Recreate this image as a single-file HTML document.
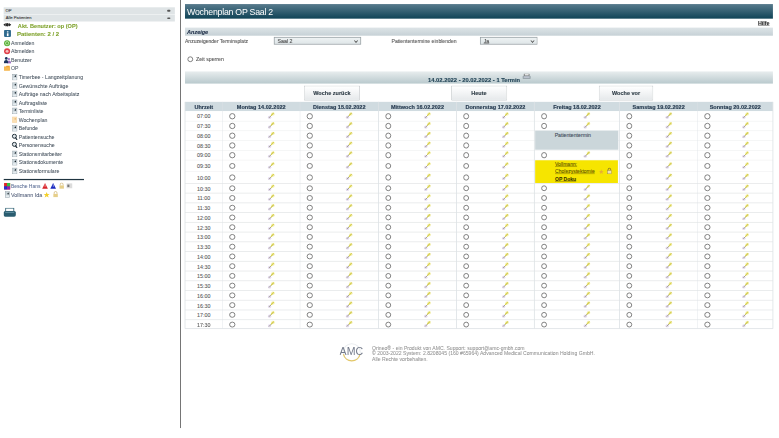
<!DOCTYPE html>
<html><head><meta charset="utf-8">
<style>
html,body{margin:0;padding:0;background:#fff;overflow:hidden;width:779px;height:438px}
#w{position:absolute;left:0;top:0;width:1920px;height:1080px;transform:scale(0.405729);transform-origin:0 0;font-family:"Liberation Sans",sans-serif;color:#333;-webkit-text-stroke:0.2px currentColor}
.a{position:absolute;white-space:nowrap}
.sel{position:absolute;box-sizing:border-box;border:2px solid #98a1a5;background:linear-gradient(#eef2f3,#dfe6e8);font-size:13px;color:#4a4a4a;padding-left:7px;line-height:17px}
.sel:after{content:"";position:absolute;right:7px;top:3.5px;width:5px;height:5px;border-right:2px solid #4a4a4a;border-bottom:2px solid #4a4a4a;transform:rotate(45deg)}
.sb{position:absolute;box-sizing:border-box;background:#dfe4e6;font-size:11.5px;color:#333;padding-left:9px}
.sb:after{content:"";position:absolute;right:11px;top:6.5px;width:8px;height:4.5px;border-radius:2px;background:#555}
.nav{font-size:12.8px;color:#44505c;height:21px;line-height:21px;-webkit-text-stroke:0.1px currentColor}
.nav i{display:inline-block;position:absolute;left:0;top:2px;width:16px;height:16px}
.radio{position:absolute;width:10.4px;height:10.4px;border:2.1px solid #666;border-radius:50%;background:#fff}
.pin{position:absolute}
.btn{position:absolute;box-sizing:border-box;border:2.4px solid #c6cacc;border-bottom-color:#b0b5b8;background:linear-gradient(#ffffff,#e6e9eb);font-weight:bold;font-size:13.6px;color:#2e3c46;-webkit-text-stroke:0.3px currentColor;text-align:center;line-height:36px;border-radius:2px}
.th{position:absolute;top:0;height:23.6px;line-height:27px;text-align:center;font-weight:bold;font-size:13.6px;color:#263b50;-webkit-text-stroke:0.4px currentColor}
.time{position:absolute;font-size:13.2px;color:#5a5a5a;text-align:center}
</style></head><body><div id="w">
<svg width="0" height="0" style="position:absolute">
<defs>
<symbol id="pin" viewBox="0 0 16 16">
<ellipse cx="11.5" cy="4.8" rx="3.8" ry="3.4" fill="#f4f0b8"/>
<ellipse cx="4.5" cy="12" rx="3.6" ry="3.2" fill="#e4daf0"/>
<path d="M4 12.5 L12 4.2" stroke="#a0a08c" stroke-width="2" stroke-linecap="round"/>
<path d="M8.2 8 L12.6 3.4" stroke="#dcd44c" stroke-width="2.3" stroke-linecap="round"/>
</symbol>
<symbol id="doc" viewBox="0 0 16 16">
<rect x="3.2" y="1" width="10.5" height="14.5" fill="#c9d4da" stroke="#96a2a9" stroke-width="1.2"/>
<rect x="4.4" y="10" width="8" height="4.5" fill="#e6ecef"/>
<path d="M7 6.5 L11.5 3 L11.5 8 Z" fill="#1c262c"/>
</symbol>
<symbol id="mag" viewBox="0 0 16 16">
<circle cx="7.5" cy="6.8" r="5" fill="#dfe6ea" stroke="#22303a" stroke-width="2.4"/>
<path d="M10.5 10.5 L13.5 15" stroke="#22303a" stroke-width="3" stroke-linecap="round"/>
</symbol>
</defs></svg>

<div class="sb" style="left:9px;top:17.5px;width:422px;height:17px;line-height:17px;font-size:10.3px;padding-left:4.5px">OP</div>
<div class="a" style="left:9px;top:34.5px;width:422px;height:1.5px;background:#f4f6f7"></div>
<div class="sb" style="left:9px;top:36px;width:422px;height:17px;line-height:17px;font-size:10.3px;padding-left:5px">Alle Patienten</div>
<div class="a" style="left:8px;top:53px;width:20px;height:16px"><svg width="20" height="16" viewBox="0 0 20 16"><path d="M0 8 L6 3.5 L6 12.5 Z M20 8 L14 3.5 L14 12.5 Z" fill="#2a2a2a"/><ellipse cx="10" cy="8" rx="4" ry="4.5" fill="#2a2a2a"/></svg></div>
<div class="a" style="left:44px;top:55.5px;font-size:13.8px;font-weight:bold;color:#7fa22c;line-height:18px">Akt. Benutzer: op (OP)</div>
<div class="a" style="left:10px;top:74px;width:17px;height:17px;background:#2f6a8e;border-radius:2px"><div style="position:absolute;left:7px;top:3px;width:3.5px;height:3px;background:#fff;border-radius:1px"></div><div style="position:absolute;left:7px;top:7.5px;width:3.5px;height:7px;background:#fff"></div></div>
<div class="a" style="left:42px;top:75px;font-size:14.7px;font-weight:bold;color:#7fa22c;line-height:18px">Patienten: 2 / 2</div>
<div class="a" style="left:9px;top:97.5px;width:17px;height:17px"><svg width="17" height="17" viewBox="0 0 17 17"><circle cx="8.5" cy="8.5" r="7.5" fill="#5bb33a"/><circle cx="8.5" cy="8.5" r="4" fill="none" stroke="#e9f7e0" stroke-width="1.5"/></svg></div>
<div class="a nav" style="left:27px;top:95.5px">Anmelden</div>
<div class="a" style="left:9px;top:117.7px;width:17px;height:17px"><svg width="17" height="17" viewBox="0 0 17 17"><circle cx="8.5" cy="8.5" r="7.5" fill="#e0404a"/><circle cx="8.5" cy="8.5" r="3.5" fill="#f7c0c0"/></svg></div>
<div class="a nav" style="left:27px;top:115.7px">Abmelden</div>
<div class="a" style="left:9px;top:139.5px;width:17px;height:17px"><svg width="19" height="17" viewBox="0 0 19 17"><path d="M8 16.5 Q9 9 13 9 Q18 9 18.5 16.5 Z" fill="#9a70c0"/><circle cx="13" cy="5.5" r="2.8" fill="#9a70c0"/><circle cx="6.5" cy="4" r="3.4" fill="#1c3560"/><path d="M0.5 16 Q0.5 8 6.5 8 Q11.5 8 11 16 Z" fill="#1c3560"/></svg></div>
<div class="a nav" style="left:27px;top:137.5px">Benutzer</div>
<div class="a" style="left:9px;top:159.1px;width:17px;height:17px"><svg width="17" height="17" viewBox="0 0 17 17"><path d="M1 5 H6 L7 3 H15 V15 H1 Z" fill="#f2a535"/><path d="M1 7 H16 V15 H1 Z" fill="#f7bb55"/></svg></div>
<div class="a nav" style="left:27px;top:157.1px">OP</div>
<div class="a" style="left:28px;top:181.8px;width:17px;height:17px"><svg width="16" height="16"><use href="#doc"/></svg></div>
<div class="a nav" style="left:46px;top:179.8px">Timerbee - Langzeitplanung</div>
<div class="a" style="left:28px;top:203.0px;width:17px;height:17px"><svg width="16" height="16"><use href="#doc"/></svg></div>
<div class="a nav" style="left:46px;top:201.0px">Gewünschte Aufträge</div>
<div class="a" style="left:28px;top:223.0px;width:17px;height:17px"><svg width="16" height="16"><use href="#doc"/></svg></div>
<div class="a nav" style="left:46px;top:221.0px">Aufträge nach Arbeitsplatz</div>
<div class="a" style="left:28px;top:245.3px;width:17px;height:17px"><svg width="16" height="16"><use href="#doc"/></svg></div>
<div class="a nav" style="left:46px;top:243.3px">Auftragsliste</div>
<div class="a" style="left:28px;top:265.1px;width:17px;height:17px"><svg width="16" height="16"><use href="#doc"/></svg></div>
<div class="a nav" style="left:46px;top:263.1px">Terminliste</div>
<div class="a" style="left:28px;top:287.0px;width:17px;height:17px"><svg width="16" height="16" viewBox="0 0 16 16"><rect x="2.5" y="1" width="11" height="14" fill="#fbe0b4" stroke="#f2c88a" stroke-width="1"/><path d="M7 6.5 L10.5 4 L10.5 8 Z" fill="#e0a050"/></svg></div>
<div class="a nav" style="left:46px;top:285.0px">Wochenplan</div>
<div class="a" style="left:28px;top:307.5px;width:17px;height:17px"><svg width="16" height="16"><use href="#doc"/></svg></div>
<div class="a nav" style="left:46px;top:305.5px">Befunde</div>
<div class="a" style="left:28px;top:328.7px;width:17px;height:17px"><svg width="16" height="16"><use href="#mag"/></svg></div>
<div class="a nav" style="left:46px;top:326.7px">Patientensuche</div>
<div class="a" style="left:28px;top:349.1px;width:17px;height:17px"><svg width="16" height="16"><use href="#mag"/></svg></div>
<div class="a nav" style="left:46px;top:347.1px">Personensuche</div>
<div class="a" style="left:28px;top:370.5px;width:17px;height:17px"><svg width="16" height="16"><use href="#doc"/></svg></div>
<div class="a nav" style="left:46px;top:368.5px">Stationsmitarbeiter</div>
<div class="a" style="left:28px;top:391.8px;width:17px;height:17px"><svg width="16" height="16"><use href="#doc"/></svg></div>
<div class="a nav" style="left:46px;top:389.8px">Stationsdokumente</div>
<div class="a" style="left:28px;top:413.0px;width:17px;height:17px"><svg width="16" height="16"><use href="#doc"/></svg></div>
<div class="a nav" style="left:46px;top:411.0px">Stationsformulare</div>
<div class="a" style="left:9px;top:441px;width:198px;height:3px;background:#1f3440"></div>
<div class="a" style="left:9.6px;top:451px;width:15px;height:16px;background:linear-gradient(90deg,transparent 50%,#30c040 50%) top/100% 50% no-repeat,linear-gradient(90deg,#2030d0 50%,#9020b0 50%) bottom/100% 50% no-repeat,#e02828"></div>
<div class="a nav" style="left:27px;top:449.5px;color:#5a6c94;font-size:12.2px">Besche Hans</div>
<div class="a" style="left:103px;top:450px"><svg width="16" height="16" viewBox="0 0 16 16"><path d="M8 1 L15 15 H1 Z" fill="#d8262c"/><path d="M7.3 5 H8.7 L8.5 11 H7.5 Z" fill="#fff"/></svg></div>
<div class="a" style="left:123px;top:450px"><svg width="16" height="16" viewBox="0 0 16 16"><path d="M8 1 L15 15 H1 Z" fill="#1a2ac0"/><path d="M7.3 5 H8.7 L8.5 11 H7.5 Z" fill="#fff"/></svg></div>
<div class="a" style="left:145px;top:450px"><svg width="14" height="16" viewBox="0 0 14 16"><path d="M3.5 7 V4.5 A3.5 3.5 0 0 1 10.5 4.5 V7" fill="none" stroke="#c8a860" stroke-width="1.6"/><rect x="1.5" y="7" width="11" height="8" fill="#e6cf8a"/></svg></div>
<div class="a" style="left:164px;top:452px;width:14px;height:12px;background:#dcdcdc"><div style="position:absolute;left:2px;top:3px;width:5px;height:6px;background:#777"></div></div>
<div class="a" style="left:10px;top:471px"><svg width="16" height="17"><use href="#doc"/></svg></div>
<div class="a nav" style="left:27px;top:470.8px;color:#4c5874;font-size:13.4px">Vollmann Ida</div>
<div class="a" style="left:107px;top:472px"><svg width="16" height="16" viewBox="0 0 16 16"><path d="M8 1 L10 6 L15.5 6.2 L11.2 9.5 L12.8 15 L8 11.8 L3.2 15 L4.8 9.5 L0.5 6.2 L6 6 Z" fill="#f3d02a"/></svg></div>
<div class="a" style="left:130px;top:471px"><svg width="14" height="16" viewBox="0 0 14 16"><path d="M3.5 7 V4.5 A3.5 3.5 0 0 1 10.5 4.5 V7" fill="none" stroke="#c8a860" stroke-width="1.6"/><rect x="1.5" y="7" width="11" height="8" fill="#e6cf8a"/></svg></div>
<div class="a" style="left:8px;top:512px"><svg width="32" height="24" viewBox="0 0 32 24"><rect x="6" y="1" width="20" height="8" fill="#fff" stroke="#2a5d70" stroke-width="2"/><rect x="1" y="8" width="30" height="14" rx="4" fill="#2a5d70"/><rect x="5" y="10" width="22" height="3" fill="#5a8a9c"/></svg></div>
<div class="a" style="left:444.2px;top:0;width:2.2px;height:1054.5px;background:#555"></div>
<div class="a" style="left:456px;top:10px;width:1449px;height:36px;background:linear-gradient(#587b8d,#0f4356)"></div>
<div class="a" style="left:461px;top:12px;height:36px;line-height:36px;font-size:21.6px;letter-spacing:-0.6px;-webkit-text-stroke:0;color:#fff">Wochenplan OP Saal 2</div>
<div class="a" style="left:1868px;top:50px;font-size:13.2px;font-weight:bold;color:#222;text-decoration:underline;line-height:16px">Hilfe</div>
<div class="a" style="left:456px;top:68px;width:1449px;height:20px;background:linear-gradient(#dde4e7,#c6d1d6)"></div>
<div class="a" style="left:461px;top:69px;font-size:13.6px;font-weight:bold;font-style:italic;color:#1f2f48;line-height:19px;-webkit-text-stroke:0.3px currentColor">Anzeige</div>
<div class="a" style="left:456px;top:93px;font-size:12.4px;color:#555;line-height:17px">Anzuzeigender Terminsplatz</div>
<div class="sel" style="left:675px;top:91px;width:215px;height:19px">Saal 2</div>
<div class="a" style="left:965px;top:93px;font-size:12.6px;color:#555;line-height:17px">Patiententermine einblenden</div>
<div class="sel" style="left:1183px;top:91px;width:142px;height:19px"><span style="text-decoration:underline">Ja</span></div>
<div class="radio" style="left:462px;top:139px"></div>
<div class="a" style="left:483px;top:138px;font-size:12.9px;color:#555;line-height:17px">Zeit sperren</div>
<div class="a" style="left:456px;top:176px;width:1449px;height:30px;background:linear-gradient(#e8edee,#b9c9cd)"></div>
<div class="a" style="left:1055px;top:189px;font-size:14.3px;font-weight:bold;color:#1d3f52;line-height:17px;-webkit-text-stroke:0.3px currentColor">14.02.2022 - 20.02.2022 - 1 Termin</div>
<div class="a" style="left:1287px;top:181px"><svg width="22" height="18" viewBox="0 0 22 18"><rect x="5" y="1" width="12" height="5" fill="#fff" stroke="#555" stroke-width="1.6"/><rect x="1" y="6" width="20" height="8" rx="2" fill="#9aa6ac"/><rect x="4" y="8" width="14" height="2" fill="#dde"/></svg></div>
<div class="btn" style="left:749px;top:210.5px;width:138px;height:37px">Woche zurück</div>
<div class="btn" style="left:1111.5px;top:210.5px;width:138px;height:37px">Heute</div>
<div class="btn" style="left:1476px;top:210.5px;width:134px;height:37px">Woche vor</div>
<div class="a" style="left:456px;top:250.7px;width:1449px;height:23.6px;background:#d0dbe0"></div>
<div class="a" style="left:456px;top:274.3px;width:1449px;height:537.4000000000001px;background:#fff"></div>
<div class="a" style="left:456px;top:250.7px;width:1449px;height:23.6px">
<div class="th" style="left:0;width:92.39999999999998px">Uhrzeit</div>
<div class="th" style="left:92.39999999999998px;width:191.0px">Montag 14.02.2022</div>
<div class="th" style="left:283.4px;width:193.5px">Dienstag 15.02.2022</div>
<div class="th" style="left:476.9px;width:192.19999999999993px">Mittwoch 16.02.2022</div>
<div class="th" style="left:669.0999999999999px;width:191.80000000000018px">Donnerstag 17.02.2022</div>
<div class="th" style="left:860.9000000000001px;width:210.19999999999982px">Freitag 18.02.2022</div>
<div class="th" style="left:1071.1px;width:192.5px">Samstag 19.02.2022</div>
<div class="th" style="left:1263.6px;width:185.4000000000001px">Sonntag 20.02.2022</div>
</div>
<div class="a time" style="left:456px;top:276.1px;width:92.39999999999998px;height:24px;line-height:24px">07:00</div>
<div class="a" style="left:456px;top:297.8px;width:1449px;height:1.5px;background:#e6e8e9"></div>
<div class="radio" style="left:565.1999999999999px;top:279.3px"></div>
<svg class="pin" style="left:659.0999999999999px;top:275.3px" width="19" height="19"><use href="#pin"/></svg>
<div class="radio" style="left:756.1999999999999px;top:279.3px"></div>
<svg class="pin" style="left:851.3499999999999px;top:275.3px" width="19" height="19"><use href="#pin"/></svg>
<div class="radio" style="left:949.6999999999999px;top:279.3px"></div>
<svg class="pin" style="left:1044.1999999999998px;top:275.3px" width="19" height="19"><use href="#pin"/></svg>
<div class="radio" style="left:1141.8999999999999px;top:279.3px"></div>
<svg class="pin" style="left:1236.2px;top:275.3px" width="19" height="19"><use href="#pin"/></svg>
<div class="radio" style="left:1333.7px;top:279.3px"></div>
<svg class="pin" style="left:1437.2px;top:275.3px" width="19" height="19"><use href="#pin"/></svg>
<div class="radio" style="left:1543.8999999999999px;top:279.3px"></div>
<svg class="pin" style="left:1638.55px;top:275.3px" width="19" height="19"><use href="#pin"/></svg>
<div class="radio" style="left:1736.3999999999999px;top:279.3px"></div>
<svg class="pin" style="left:1827.5px;top:275.3px" width="19" height="19"><use href="#pin"/></svg>
<div class="a time" style="left:456px;top:300.1px;width:92.39999999999998px;height:24px;line-height:24px">07:30</div>
<div class="a" style="left:456px;top:321.8px;width:1449px;height:1.5px;background:#e6e8e9"></div>
<div class="radio" style="left:565.1999999999999px;top:303.3px"></div>
<svg class="pin" style="left:659.0999999999999px;top:299.3px" width="19" height="19"><use href="#pin"/></svg>
<div class="radio" style="left:756.1999999999999px;top:303.3px"></div>
<svg class="pin" style="left:851.3499999999999px;top:299.3px" width="19" height="19"><use href="#pin"/></svg>
<div class="radio" style="left:949.6999999999999px;top:303.3px"></div>
<svg class="pin" style="left:1044.1999999999998px;top:299.3px" width="19" height="19"><use href="#pin"/></svg>
<div class="radio" style="left:1141.8999999999999px;top:303.3px"></div>
<svg class="pin" style="left:1236.2px;top:299.3px" width="19" height="19"><use href="#pin"/></svg>
<div class="radio" style="left:1333.7px;top:303.3px"></div>
<svg class="pin" style="left:1437.2px;top:299.3px" width="19" height="19"><use href="#pin"/></svg>
<div class="radio" style="left:1543.8999999999999px;top:303.3px"></div>
<svg class="pin" style="left:1638.55px;top:299.3px" width="19" height="19"><use href="#pin"/></svg>
<div class="radio" style="left:1736.3999999999999px;top:303.3px"></div>
<svg class="pin" style="left:1827.5px;top:299.3px" width="19" height="19"><use href="#pin"/></svg>
<div class="a time" style="left:456px;top:324.1px;width:92.39999999999998px;height:24px;line-height:24px">08:00</div>
<div class="a" style="left:456px;top:345.8px;width:1449px;height:1.5px;background:#e6e8e9"></div>
<div class="radio" style="left:565.1999999999999px;top:327.3px"></div>
<svg class="pin" style="left:659.0999999999999px;top:323.3px" width="19" height="19"><use href="#pin"/></svg>
<div class="radio" style="left:756.1999999999999px;top:327.3px"></div>
<svg class="pin" style="left:851.3499999999999px;top:323.3px" width="19" height="19"><use href="#pin"/></svg>
<div class="radio" style="left:949.6999999999999px;top:327.3px"></div>
<svg class="pin" style="left:1044.1999999999998px;top:323.3px" width="19" height="19"><use href="#pin"/></svg>
<div class="radio" style="left:1141.8999999999999px;top:327.3px"></div>
<svg class="pin" style="left:1236.2px;top:323.3px" width="19" height="19"><use href="#pin"/></svg>
<div class="radio" style="left:1543.8999999999999px;top:327.3px"></div>
<svg class="pin" style="left:1638.55px;top:323.3px" width="19" height="19"><use href="#pin"/></svg>
<div class="radio" style="left:1736.3999999999999px;top:327.3px"></div>
<svg class="pin" style="left:1827.5px;top:323.3px" width="19" height="19"><use href="#pin"/></svg>
<div class="a time" style="left:456px;top:348.1px;width:92.39999999999998px;height:24px;line-height:24px">08:30</div>
<div class="a" style="left:456px;top:369.8px;width:1449px;height:1.5px;background:#e6e8e9"></div>
<div class="radio" style="left:565.1999999999999px;top:351.3px"></div>
<svg class="pin" style="left:659.0999999999999px;top:347.3px" width="19" height="19"><use href="#pin"/></svg>
<div class="radio" style="left:756.1999999999999px;top:351.3px"></div>
<svg class="pin" style="left:851.3499999999999px;top:347.3px" width="19" height="19"><use href="#pin"/></svg>
<div class="radio" style="left:949.6999999999999px;top:351.3px"></div>
<svg class="pin" style="left:1044.1999999999998px;top:347.3px" width="19" height="19"><use href="#pin"/></svg>
<div class="radio" style="left:1141.8999999999999px;top:351.3px"></div>
<svg class="pin" style="left:1236.2px;top:347.3px" width="19" height="19"><use href="#pin"/></svg>
<div class="radio" style="left:1543.8999999999999px;top:351.3px"></div>
<svg class="pin" style="left:1638.55px;top:347.3px" width="19" height="19"><use href="#pin"/></svg>
<div class="radio" style="left:1736.3999999999999px;top:351.3px"></div>
<svg class="pin" style="left:1827.5px;top:347.3px" width="19" height="19"><use href="#pin"/></svg>
<div class="a time" style="left:456px;top:372.1px;width:92.39999999999998px;height:24px;line-height:24px">09:00</div>
<div class="a" style="left:456px;top:393.8px;width:1449px;height:1.5px;background:#e6e8e9"></div>
<div class="radio" style="left:565.1999999999999px;top:375.3px"></div>
<svg class="pin" style="left:659.0999999999999px;top:371.3px" width="19" height="19"><use href="#pin"/></svg>
<div class="radio" style="left:756.1999999999999px;top:375.3px"></div>
<svg class="pin" style="left:851.3499999999999px;top:371.3px" width="19" height="19"><use href="#pin"/></svg>
<div class="radio" style="left:949.6999999999999px;top:375.3px"></div>
<svg class="pin" style="left:1044.1999999999998px;top:371.3px" width="19" height="19"><use href="#pin"/></svg>
<div class="radio" style="left:1141.8999999999999px;top:375.3px"></div>
<svg class="pin" style="left:1236.2px;top:371.3px" width="19" height="19"><use href="#pin"/></svg>
<div class="radio" style="left:1333.7px;top:375.3px"></div>
<svg class="pin" style="left:1437.2px;top:371.3px" width="19" height="19"><use href="#pin"/></svg>
<div class="radio" style="left:1543.8999999999999px;top:375.3px"></div>
<svg class="pin" style="left:1638.55px;top:371.3px" width="19" height="19"><use href="#pin"/></svg>
<div class="radio" style="left:1736.3999999999999px;top:375.3px"></div>
<svg class="pin" style="left:1827.5px;top:371.3px" width="19" height="19"><use href="#pin"/></svg>
<div class="a time" style="left:456px;top:396.1px;width:92.39999999999998px;height:28.7px;line-height:28.7px">09:30</div>
<div class="a" style="left:456px;top:422.5px;width:1449px;height:1.5px;background:#e6e8e9"></div>
<div class="radio" style="left:565.1999999999999px;top:401.65000000000003px"></div>
<svg class="pin" style="left:659.0999999999999px;top:397.65000000000003px" width="19" height="19"><use href="#pin"/></svg>
<div class="radio" style="left:756.1999999999999px;top:401.65000000000003px"></div>
<svg class="pin" style="left:851.3499999999999px;top:397.65000000000003px" width="19" height="19"><use href="#pin"/></svg>
<div class="radio" style="left:949.6999999999999px;top:401.65000000000003px"></div>
<svg class="pin" style="left:1044.1999999999998px;top:397.65000000000003px" width="19" height="19"><use href="#pin"/></svg>
<div class="radio" style="left:1141.8999999999999px;top:401.65000000000003px"></div>
<svg class="pin" style="left:1236.2px;top:397.65000000000003px" width="19" height="19"><use href="#pin"/></svg>
<div class="radio" style="left:1543.8999999999999px;top:401.65000000000003px"></div>
<svg class="pin" style="left:1638.55px;top:397.65000000000003px" width="19" height="19"><use href="#pin"/></svg>
<div class="radio" style="left:1736.3999999999999px;top:401.65000000000003px"></div>
<svg class="pin" style="left:1827.5px;top:397.65000000000003px" width="19" height="19"><use href="#pin"/></svg>
<div class="a time" style="left:456px;top:424.8px;width:92.39999999999998px;height:28.7px;line-height:28.7px">10:00</div>
<div class="a" style="left:456px;top:451.2px;width:1449px;height:1.5px;background:#e6e8e9"></div>
<div class="radio" style="left:565.1999999999999px;top:430.35px"></div>
<svg class="pin" style="left:659.0999999999999px;top:426.35px" width="19" height="19"><use href="#pin"/></svg>
<div class="radio" style="left:756.1999999999999px;top:430.35px"></div>
<svg class="pin" style="left:851.3499999999999px;top:426.35px" width="19" height="19"><use href="#pin"/></svg>
<div class="radio" style="left:949.6999999999999px;top:430.35px"></div>
<svg class="pin" style="left:1044.1999999999998px;top:426.35px" width="19" height="19"><use href="#pin"/></svg>
<div class="radio" style="left:1141.8999999999999px;top:430.35px"></div>
<svg class="pin" style="left:1236.2px;top:426.35px" width="19" height="19"><use href="#pin"/></svg>
<div class="radio" style="left:1543.8999999999999px;top:430.35px"></div>
<svg class="pin" style="left:1638.55px;top:426.35px" width="19" height="19"><use href="#pin"/></svg>
<div class="radio" style="left:1736.3999999999999px;top:430.35px"></div>
<svg class="pin" style="left:1827.5px;top:426.35px" width="19" height="19"><use href="#pin"/></svg>
<div class="a time" style="left:456px;top:453.5px;width:92.39999999999998px;height:24px;line-height:24px">10:30</div>
<div class="a" style="left:456px;top:475.2px;width:1449px;height:1.5px;background:#e6e8e9"></div>
<div class="radio" style="left:565.1999999999999px;top:456.7px"></div>
<svg class="pin" style="left:659.0999999999999px;top:452.7px" width="19" height="19"><use href="#pin"/></svg>
<div class="radio" style="left:756.1999999999999px;top:456.7px"></div>
<svg class="pin" style="left:851.3499999999999px;top:452.7px" width="19" height="19"><use href="#pin"/></svg>
<div class="radio" style="left:949.6999999999999px;top:456.7px"></div>
<svg class="pin" style="left:1044.1999999999998px;top:452.7px" width="19" height="19"><use href="#pin"/></svg>
<div class="radio" style="left:1141.8999999999999px;top:456.7px"></div>
<svg class="pin" style="left:1236.2px;top:452.7px" width="19" height="19"><use href="#pin"/></svg>
<div class="radio" style="left:1333.7px;top:456.7px"></div>
<svg class="pin" style="left:1437.2px;top:452.7px" width="19" height="19"><use href="#pin"/></svg>
<div class="radio" style="left:1543.8999999999999px;top:456.7px"></div>
<svg class="pin" style="left:1638.55px;top:452.7px" width="19" height="19"><use href="#pin"/></svg>
<div class="radio" style="left:1736.3999999999999px;top:456.7px"></div>
<svg class="pin" style="left:1827.5px;top:452.7px" width="19" height="19"><use href="#pin"/></svg>
<div class="a time" style="left:456px;top:477.5px;width:92.39999999999998px;height:24px;line-height:24px">11:00</div>
<div class="a" style="left:456px;top:499.2px;width:1449px;height:1.5px;background:#e6e8e9"></div>
<div class="radio" style="left:565.1999999999999px;top:480.7px"></div>
<svg class="pin" style="left:659.0999999999999px;top:476.7px" width="19" height="19"><use href="#pin"/></svg>
<div class="radio" style="left:756.1999999999999px;top:480.7px"></div>
<svg class="pin" style="left:851.3499999999999px;top:476.7px" width="19" height="19"><use href="#pin"/></svg>
<div class="radio" style="left:949.6999999999999px;top:480.7px"></div>
<svg class="pin" style="left:1044.1999999999998px;top:476.7px" width="19" height="19"><use href="#pin"/></svg>
<div class="radio" style="left:1141.8999999999999px;top:480.7px"></div>
<svg class="pin" style="left:1236.2px;top:476.7px" width="19" height="19"><use href="#pin"/></svg>
<div class="radio" style="left:1333.7px;top:480.7px"></div>
<svg class="pin" style="left:1437.2px;top:476.7px" width="19" height="19"><use href="#pin"/></svg>
<div class="radio" style="left:1543.8999999999999px;top:480.7px"></div>
<svg class="pin" style="left:1638.55px;top:476.7px" width="19" height="19"><use href="#pin"/></svg>
<div class="radio" style="left:1736.3999999999999px;top:480.7px"></div>
<svg class="pin" style="left:1827.5px;top:476.7px" width="19" height="19"><use href="#pin"/></svg>
<div class="a time" style="left:456px;top:501.5px;width:92.39999999999998px;height:24px;line-height:24px">11:30</div>
<div class="a" style="left:456px;top:523.2px;width:1449px;height:1.5px;background:#e6e8e9"></div>
<div class="radio" style="left:565.1999999999999px;top:504.7px"></div>
<svg class="pin" style="left:659.0999999999999px;top:500.7px" width="19" height="19"><use href="#pin"/></svg>
<div class="radio" style="left:756.1999999999999px;top:504.7px"></div>
<svg class="pin" style="left:851.3499999999999px;top:500.7px" width="19" height="19"><use href="#pin"/></svg>
<div class="radio" style="left:949.6999999999999px;top:504.7px"></div>
<svg class="pin" style="left:1044.1999999999998px;top:500.7px" width="19" height="19"><use href="#pin"/></svg>
<div class="radio" style="left:1141.8999999999999px;top:504.7px"></div>
<svg class="pin" style="left:1236.2px;top:500.7px" width="19" height="19"><use href="#pin"/></svg>
<div class="radio" style="left:1333.7px;top:504.7px"></div>
<svg class="pin" style="left:1437.2px;top:500.7px" width="19" height="19"><use href="#pin"/></svg>
<div class="radio" style="left:1543.8999999999999px;top:504.7px"></div>
<svg class="pin" style="left:1638.55px;top:500.7px" width="19" height="19"><use href="#pin"/></svg>
<div class="radio" style="left:1736.3999999999999px;top:504.7px"></div>
<svg class="pin" style="left:1827.5px;top:500.7px" width="19" height="19"><use href="#pin"/></svg>
<div class="a time" style="left:456px;top:525.5px;width:92.39999999999998px;height:24px;line-height:24px">12:00</div>
<div class="a" style="left:456px;top:547.2px;width:1449px;height:1.5px;background:#e6e8e9"></div>
<div class="radio" style="left:565.1999999999999px;top:528.7px"></div>
<svg class="pin" style="left:659.0999999999999px;top:524.7px" width="19" height="19"><use href="#pin"/></svg>
<div class="radio" style="left:756.1999999999999px;top:528.7px"></div>
<svg class="pin" style="left:851.3499999999999px;top:524.7px" width="19" height="19"><use href="#pin"/></svg>
<div class="radio" style="left:949.6999999999999px;top:528.7px"></div>
<svg class="pin" style="left:1044.1999999999998px;top:524.7px" width="19" height="19"><use href="#pin"/></svg>
<div class="radio" style="left:1141.8999999999999px;top:528.7px"></div>
<svg class="pin" style="left:1236.2px;top:524.7px" width="19" height="19"><use href="#pin"/></svg>
<div class="radio" style="left:1333.7px;top:528.7px"></div>
<svg class="pin" style="left:1437.2px;top:524.7px" width="19" height="19"><use href="#pin"/></svg>
<div class="radio" style="left:1543.8999999999999px;top:528.7px"></div>
<svg class="pin" style="left:1638.55px;top:524.7px" width="19" height="19"><use href="#pin"/></svg>
<div class="radio" style="left:1736.3999999999999px;top:528.7px"></div>
<svg class="pin" style="left:1827.5px;top:524.7px" width="19" height="19"><use href="#pin"/></svg>
<div class="a time" style="left:456px;top:549.5px;width:92.39999999999998px;height:24px;line-height:24px">12:30</div>
<div class="a" style="left:456px;top:571.2px;width:1449px;height:1.5px;background:#e6e8e9"></div>
<div class="radio" style="left:565.1999999999999px;top:552.7px"></div>
<svg class="pin" style="left:659.0999999999999px;top:548.7px" width="19" height="19"><use href="#pin"/></svg>
<div class="radio" style="left:756.1999999999999px;top:552.7px"></div>
<svg class="pin" style="left:851.3499999999999px;top:548.7px" width="19" height="19"><use href="#pin"/></svg>
<div class="radio" style="left:949.6999999999999px;top:552.7px"></div>
<svg class="pin" style="left:1044.1999999999998px;top:548.7px" width="19" height="19"><use href="#pin"/></svg>
<div class="radio" style="left:1141.8999999999999px;top:552.7px"></div>
<svg class="pin" style="left:1236.2px;top:548.7px" width="19" height="19"><use href="#pin"/></svg>
<div class="radio" style="left:1333.7px;top:552.7px"></div>
<svg class="pin" style="left:1437.2px;top:548.7px" width="19" height="19"><use href="#pin"/></svg>
<div class="radio" style="left:1543.8999999999999px;top:552.7px"></div>
<svg class="pin" style="left:1638.55px;top:548.7px" width="19" height="19"><use href="#pin"/></svg>
<div class="radio" style="left:1736.3999999999999px;top:552.7px"></div>
<svg class="pin" style="left:1827.5px;top:548.7px" width="19" height="19"><use href="#pin"/></svg>
<div class="a time" style="left:456px;top:573.5px;width:92.39999999999998px;height:24px;line-height:24px">13:00</div>
<div class="a" style="left:456px;top:595.2px;width:1449px;height:1.5px;background:#e6e8e9"></div>
<div class="radio" style="left:565.1999999999999px;top:576.7px"></div>
<svg class="pin" style="left:659.0999999999999px;top:572.7px" width="19" height="19"><use href="#pin"/></svg>
<div class="radio" style="left:756.1999999999999px;top:576.7px"></div>
<svg class="pin" style="left:851.3499999999999px;top:572.7px" width="19" height="19"><use href="#pin"/></svg>
<div class="radio" style="left:949.6999999999999px;top:576.7px"></div>
<svg class="pin" style="left:1044.1999999999998px;top:572.7px" width="19" height="19"><use href="#pin"/></svg>
<div class="radio" style="left:1141.8999999999999px;top:576.7px"></div>
<svg class="pin" style="left:1236.2px;top:572.7px" width="19" height="19"><use href="#pin"/></svg>
<div class="radio" style="left:1333.7px;top:576.7px"></div>
<svg class="pin" style="left:1437.2px;top:572.7px" width="19" height="19"><use href="#pin"/></svg>
<div class="radio" style="left:1543.8999999999999px;top:576.7px"></div>
<svg class="pin" style="left:1638.55px;top:572.7px" width="19" height="19"><use href="#pin"/></svg>
<div class="radio" style="left:1736.3999999999999px;top:576.7px"></div>
<svg class="pin" style="left:1827.5px;top:572.7px" width="19" height="19"><use href="#pin"/></svg>
<div class="a time" style="left:456px;top:597.5px;width:92.39999999999998px;height:24px;line-height:24px">13:30</div>
<div class="a" style="left:456px;top:619.2px;width:1449px;height:1.5px;background:#e6e8e9"></div>
<div class="radio" style="left:565.1999999999999px;top:600.7px"></div>
<svg class="pin" style="left:659.0999999999999px;top:596.7px" width="19" height="19"><use href="#pin"/></svg>
<div class="radio" style="left:756.1999999999999px;top:600.7px"></div>
<svg class="pin" style="left:851.3499999999999px;top:596.7px" width="19" height="19"><use href="#pin"/></svg>
<div class="radio" style="left:949.6999999999999px;top:600.7px"></div>
<svg class="pin" style="left:1044.1999999999998px;top:596.7px" width="19" height="19"><use href="#pin"/></svg>
<div class="radio" style="left:1141.8999999999999px;top:600.7px"></div>
<svg class="pin" style="left:1236.2px;top:596.7px" width="19" height="19"><use href="#pin"/></svg>
<div class="radio" style="left:1333.7px;top:600.7px"></div>
<svg class="pin" style="left:1437.2px;top:596.7px" width="19" height="19"><use href="#pin"/></svg>
<div class="radio" style="left:1543.8999999999999px;top:600.7px"></div>
<svg class="pin" style="left:1638.55px;top:596.7px" width="19" height="19"><use href="#pin"/></svg>
<div class="radio" style="left:1736.3999999999999px;top:600.7px"></div>
<svg class="pin" style="left:1827.5px;top:596.7px" width="19" height="19"><use href="#pin"/></svg>
<div class="a time" style="left:456px;top:621.5px;width:92.39999999999998px;height:24px;line-height:24px">14:00</div>
<div class="a" style="left:456px;top:643.2px;width:1449px;height:1.5px;background:#e6e8e9"></div>
<div class="radio" style="left:565.1999999999999px;top:624.7px"></div>
<svg class="pin" style="left:659.0999999999999px;top:620.7px" width="19" height="19"><use href="#pin"/></svg>
<div class="radio" style="left:756.1999999999999px;top:624.7px"></div>
<svg class="pin" style="left:851.3499999999999px;top:620.7px" width="19" height="19"><use href="#pin"/></svg>
<div class="radio" style="left:949.6999999999999px;top:624.7px"></div>
<svg class="pin" style="left:1044.1999999999998px;top:620.7px" width="19" height="19"><use href="#pin"/></svg>
<div class="radio" style="left:1141.8999999999999px;top:624.7px"></div>
<svg class="pin" style="left:1236.2px;top:620.7px" width="19" height="19"><use href="#pin"/></svg>
<div class="radio" style="left:1333.7px;top:624.7px"></div>
<svg class="pin" style="left:1437.2px;top:620.7px" width="19" height="19"><use href="#pin"/></svg>
<div class="radio" style="left:1543.8999999999999px;top:624.7px"></div>
<svg class="pin" style="left:1638.55px;top:620.7px" width="19" height="19"><use href="#pin"/></svg>
<div class="radio" style="left:1736.3999999999999px;top:624.7px"></div>
<svg class="pin" style="left:1827.5px;top:620.7px" width="19" height="19"><use href="#pin"/></svg>
<div class="a time" style="left:456px;top:645.5px;width:92.39999999999998px;height:24px;line-height:24px">14:30</div>
<div class="a" style="left:456px;top:667.2px;width:1449px;height:1.5px;background:#e6e8e9"></div>
<div class="radio" style="left:565.1999999999999px;top:648.7px"></div>
<svg class="pin" style="left:659.0999999999999px;top:644.7px" width="19" height="19"><use href="#pin"/></svg>
<div class="radio" style="left:756.1999999999999px;top:648.7px"></div>
<svg class="pin" style="left:851.3499999999999px;top:644.7px" width="19" height="19"><use href="#pin"/></svg>
<div class="radio" style="left:949.6999999999999px;top:648.7px"></div>
<svg class="pin" style="left:1044.1999999999998px;top:644.7px" width="19" height="19"><use href="#pin"/></svg>
<div class="radio" style="left:1141.8999999999999px;top:648.7px"></div>
<svg class="pin" style="left:1236.2px;top:644.7px" width="19" height="19"><use href="#pin"/></svg>
<div class="radio" style="left:1333.7px;top:648.7px"></div>
<svg class="pin" style="left:1437.2px;top:644.7px" width="19" height="19"><use href="#pin"/></svg>
<div class="radio" style="left:1543.8999999999999px;top:648.7px"></div>
<svg class="pin" style="left:1638.55px;top:644.7px" width="19" height="19"><use href="#pin"/></svg>
<div class="radio" style="left:1736.3999999999999px;top:648.7px"></div>
<svg class="pin" style="left:1827.5px;top:644.7px" width="19" height="19"><use href="#pin"/></svg>
<div class="a time" style="left:456px;top:669.5px;width:92.39999999999998px;height:24px;line-height:24px">15:00</div>
<div class="a" style="left:456px;top:691.2px;width:1449px;height:1.5px;background:#e6e8e9"></div>
<div class="radio" style="left:565.1999999999999px;top:672.7px"></div>
<svg class="pin" style="left:659.0999999999999px;top:668.7px" width="19" height="19"><use href="#pin"/></svg>
<div class="radio" style="left:756.1999999999999px;top:672.7px"></div>
<svg class="pin" style="left:851.3499999999999px;top:668.7px" width="19" height="19"><use href="#pin"/></svg>
<div class="radio" style="left:949.6999999999999px;top:672.7px"></div>
<svg class="pin" style="left:1044.1999999999998px;top:668.7px" width="19" height="19"><use href="#pin"/></svg>
<div class="radio" style="left:1141.8999999999999px;top:672.7px"></div>
<svg class="pin" style="left:1236.2px;top:668.7px" width="19" height="19"><use href="#pin"/></svg>
<div class="radio" style="left:1333.7px;top:672.7px"></div>
<svg class="pin" style="left:1437.2px;top:668.7px" width="19" height="19"><use href="#pin"/></svg>
<div class="radio" style="left:1543.8999999999999px;top:672.7px"></div>
<svg class="pin" style="left:1638.55px;top:668.7px" width="19" height="19"><use href="#pin"/></svg>
<div class="radio" style="left:1736.3999999999999px;top:672.7px"></div>
<svg class="pin" style="left:1827.5px;top:668.7px" width="19" height="19"><use href="#pin"/></svg>
<div class="a time" style="left:456px;top:693.5px;width:92.39999999999998px;height:24px;line-height:24px">15:30</div>
<div class="a" style="left:456px;top:715.2px;width:1449px;height:1.5px;background:#e6e8e9"></div>
<div class="radio" style="left:565.1999999999999px;top:696.7px"></div>
<svg class="pin" style="left:659.0999999999999px;top:692.7px" width="19" height="19"><use href="#pin"/></svg>
<div class="radio" style="left:756.1999999999999px;top:696.7px"></div>
<svg class="pin" style="left:851.3499999999999px;top:692.7px" width="19" height="19"><use href="#pin"/></svg>
<div class="radio" style="left:949.6999999999999px;top:696.7px"></div>
<svg class="pin" style="left:1044.1999999999998px;top:692.7px" width="19" height="19"><use href="#pin"/></svg>
<div class="radio" style="left:1141.8999999999999px;top:696.7px"></div>
<svg class="pin" style="left:1236.2px;top:692.7px" width="19" height="19"><use href="#pin"/></svg>
<div class="radio" style="left:1333.7px;top:696.7px"></div>
<svg class="pin" style="left:1437.2px;top:692.7px" width="19" height="19"><use href="#pin"/></svg>
<div class="radio" style="left:1543.8999999999999px;top:696.7px"></div>
<svg class="pin" style="left:1638.55px;top:692.7px" width="19" height="19"><use href="#pin"/></svg>
<div class="radio" style="left:1736.3999999999999px;top:696.7px"></div>
<svg class="pin" style="left:1827.5px;top:692.7px" width="19" height="19"><use href="#pin"/></svg>
<div class="a time" style="left:456px;top:717.5px;width:92.39999999999998px;height:24px;line-height:24px">16:00</div>
<div class="a" style="left:456px;top:739.2px;width:1449px;height:1.5px;background:#e6e8e9"></div>
<div class="radio" style="left:565.1999999999999px;top:720.7px"></div>
<svg class="pin" style="left:659.0999999999999px;top:716.7px" width="19" height="19"><use href="#pin"/></svg>
<div class="radio" style="left:756.1999999999999px;top:720.7px"></div>
<svg class="pin" style="left:851.3499999999999px;top:716.7px" width="19" height="19"><use href="#pin"/></svg>
<div class="radio" style="left:949.6999999999999px;top:720.7px"></div>
<svg class="pin" style="left:1044.1999999999998px;top:716.7px" width="19" height="19"><use href="#pin"/></svg>
<div class="radio" style="left:1141.8999999999999px;top:720.7px"></div>
<svg class="pin" style="left:1236.2px;top:716.7px" width="19" height="19"><use href="#pin"/></svg>
<div class="radio" style="left:1333.7px;top:720.7px"></div>
<svg class="pin" style="left:1437.2px;top:716.7px" width="19" height="19"><use href="#pin"/></svg>
<div class="radio" style="left:1543.8999999999999px;top:720.7px"></div>
<svg class="pin" style="left:1638.55px;top:716.7px" width="19" height="19"><use href="#pin"/></svg>
<div class="radio" style="left:1736.3999999999999px;top:720.7px"></div>
<svg class="pin" style="left:1827.5px;top:716.7px" width="19" height="19"><use href="#pin"/></svg>
<div class="a time" style="left:456px;top:741.5px;width:92.39999999999998px;height:24px;line-height:24px">16:30</div>
<div class="a" style="left:456px;top:763.2px;width:1449px;height:1.5px;background:#e6e8e9"></div>
<div class="radio" style="left:565.1999999999999px;top:744.7px"></div>
<svg class="pin" style="left:659.0999999999999px;top:740.7px" width="19" height="19"><use href="#pin"/></svg>
<div class="radio" style="left:756.1999999999999px;top:744.7px"></div>
<svg class="pin" style="left:851.3499999999999px;top:740.7px" width="19" height="19"><use href="#pin"/></svg>
<div class="radio" style="left:949.6999999999999px;top:744.7px"></div>
<svg class="pin" style="left:1044.1999999999998px;top:740.7px" width="19" height="19"><use href="#pin"/></svg>
<div class="radio" style="left:1141.8999999999999px;top:744.7px"></div>
<svg class="pin" style="left:1236.2px;top:740.7px" width="19" height="19"><use href="#pin"/></svg>
<div class="radio" style="left:1333.7px;top:744.7px"></div>
<svg class="pin" style="left:1437.2px;top:740.7px" width="19" height="19"><use href="#pin"/></svg>
<div class="radio" style="left:1543.8999999999999px;top:744.7px"></div>
<svg class="pin" style="left:1638.55px;top:740.7px" width="19" height="19"><use href="#pin"/></svg>
<div class="radio" style="left:1736.3999999999999px;top:744.7px"></div>
<svg class="pin" style="left:1827.5px;top:740.7px" width="19" height="19"><use href="#pin"/></svg>
<div class="a time" style="left:456px;top:765.5px;width:92.39999999999998px;height:24px;line-height:24px">17:00</div>
<div class="a" style="left:456px;top:787.2px;width:1449px;height:1.5px;background:#e6e8e9"></div>
<div class="radio" style="left:565.1999999999999px;top:768.7px"></div>
<svg class="pin" style="left:659.0999999999999px;top:764.7px" width="19" height="19"><use href="#pin"/></svg>
<div class="radio" style="left:756.1999999999999px;top:768.7px"></div>
<svg class="pin" style="left:851.3499999999999px;top:764.7px" width="19" height="19"><use href="#pin"/></svg>
<div class="radio" style="left:949.6999999999999px;top:768.7px"></div>
<svg class="pin" style="left:1044.1999999999998px;top:764.7px" width="19" height="19"><use href="#pin"/></svg>
<div class="radio" style="left:1141.8999999999999px;top:768.7px"></div>
<svg class="pin" style="left:1236.2px;top:764.7px" width="19" height="19"><use href="#pin"/></svg>
<div class="radio" style="left:1333.7px;top:768.7px"></div>
<svg class="pin" style="left:1437.2px;top:764.7px" width="19" height="19"><use href="#pin"/></svg>
<div class="radio" style="left:1543.8999999999999px;top:768.7px"></div>
<svg class="pin" style="left:1638.55px;top:764.7px" width="19" height="19"><use href="#pin"/></svg>
<div class="radio" style="left:1736.3999999999999px;top:768.7px"></div>
<svg class="pin" style="left:1827.5px;top:764.7px" width="19" height="19"><use href="#pin"/></svg>
<div class="a time" style="left:456px;top:789.5px;width:92.39999999999998px;height:24px;line-height:24px">17:30</div>
<div class="radio" style="left:565.1999999999999px;top:792.7px"></div>
<svg class="pin" style="left:659.0999999999999px;top:788.7px" width="19" height="19"><use href="#pin"/></svg>
<div class="radio" style="left:756.1999999999999px;top:792.7px"></div>
<svg class="pin" style="left:851.3499999999999px;top:788.7px" width="19" height="19"><use href="#pin"/></svg>
<div class="radio" style="left:949.6999999999999px;top:792.7px"></div>
<svg class="pin" style="left:1044.1999999999998px;top:788.7px" width="19" height="19"><use href="#pin"/></svg>
<div class="radio" style="left:1141.8999999999999px;top:792.7px"></div>
<svg class="pin" style="left:1236.2px;top:788.7px" width="19" height="19"><use href="#pin"/></svg>
<div class="radio" style="left:1333.7px;top:792.7px"></div>
<svg class="pin" style="left:1437.2px;top:788.7px" width="19" height="19"><use href="#pin"/></svg>
<div class="radio" style="left:1543.8999999999999px;top:792.7px"></div>
<svg class="pin" style="left:1638.55px;top:788.7px" width="19" height="19"><use href="#pin"/></svg>
<div class="radio" style="left:1736.3999999999999px;top:792.7px"></div>
<svg class="pin" style="left:1827.5px;top:788.7px" width="19" height="19"><use href="#pin"/></svg>
<div class="a" style="left:455.25px;top:250.7px;width:1.5px;height:559.5px;background:#dde2e5"></div>
<div class="a" style="left:547.65px;top:250.7px;width:1.5px;height:559.5px;background:#dde2e5"></div>
<div class="a" style="left:738.65px;top:250.7px;width:1.5px;height:559.5px;background:#dde2e5"></div>
<div class="a" style="left:932.15px;top:250.7px;width:1.5px;height:559.5px;background:#dde2e5"></div>
<div class="a" style="left:1124.35px;top:250.7px;width:1.5px;height:559.5px;background:#dde2e5"></div>
<div class="a" style="left:1316.15px;top:250.7px;width:1.5px;height:559.5px;background:#dde2e5"></div>
<div class="a" style="left:1526.35px;top:250.7px;width:1.5px;height:559.5px;background:#dde2e5"></div>
<div class="a" style="left:1718.85px;top:250.7px;width:1.5px;height:559.5px;background:#dde2e5"></div>
<div class="a" style="left:1904.25px;top:250.7px;width:1.5px;height:559.5px;background:#dde2e5"></div>
<div class="a" style="left:456px;top:809.2px;width:1449px;height:1.8px;background:#dde2e5"></div>
<div class="a" style="left:1318.9px;top:322.3px;width:205.19999999999982px;height:46.5px;background:#cbd6da"></div>
<div class="a" style="left:1367px;top:325.3px;font-size:12.8px;color:#3a4656;line-height:16px">Patiententermin</div>
<div class="a" style="left:1318.9px;top:395.3px;width:204.19999999999982px;height:56px;background:#f6e500"></div>
<div class="a" style="left:1368px;top:397.3px;font-size:12.4px;color:#5b5000;line-height:17.7px;text-decoration:underline">Vollmann:<br>Cholezystektomie<br><b style="color:#3a3400">OP Doku</b></div>
<div class="a" style="left:1475px;top:416.3px"><svg width="14" height="14" viewBox="0 0 14 14"><path d="M7 1 L8.6 5.2 L13 5.4 L9.6 8.2 L10.8 12.6 L7 10.1 L3.2 12.6 L4.4 8.2 L1 5.4 L5.4 5.2 Z" fill="#e8b030"/></svg></div>
<div class="a" style="left:1496px;top:413.3px"><svg width="12" height="16" viewBox="0 0 12 16"><path d="M3 7 V4.5 A3 3 0 0 1 9 4.5 V7" fill="none" stroke="#6a5a30" stroke-width="1.8"/><rect x="1" y="7" width="10" height="8.5" fill="#eee0b0" stroke="#9a8848" stroke-width="1.2"/></svg></div>
<div class="a" style="left:843px;top:843px"><svg width="48" height="50" viewBox="0 0 48 50"><circle cx="24" cy="25" r="21" fill="none" stroke="#e9ecef" stroke-width="2.5"/><path d="M3.5 30 A21 21 0 0 0 44.5 30" fill="none" stroke="#e4c868" stroke-width="3"/></svg></div>
<div class="a" style="left:837px;top:851px;font-size:26px;color:#737a8a;line-height:30px;letter-spacing:0px;-webkit-text-stroke:0">AMC</div>
<div class="a" style="left:917px;top:850.5px;font-size:12.58px;color:#949494;line-height:14.4px;-webkit-text-stroke:0.15px currentColor">Orineo® - ein Produkt von AMC. Support: support@amc-gmbh.com<br>© 2003-2022 System: 2.8208045 (160 #65964) Advanced Medical Communication Holding GmbH.<br>Alle Rechte vorbehalten.</div>
</div></body></html>
